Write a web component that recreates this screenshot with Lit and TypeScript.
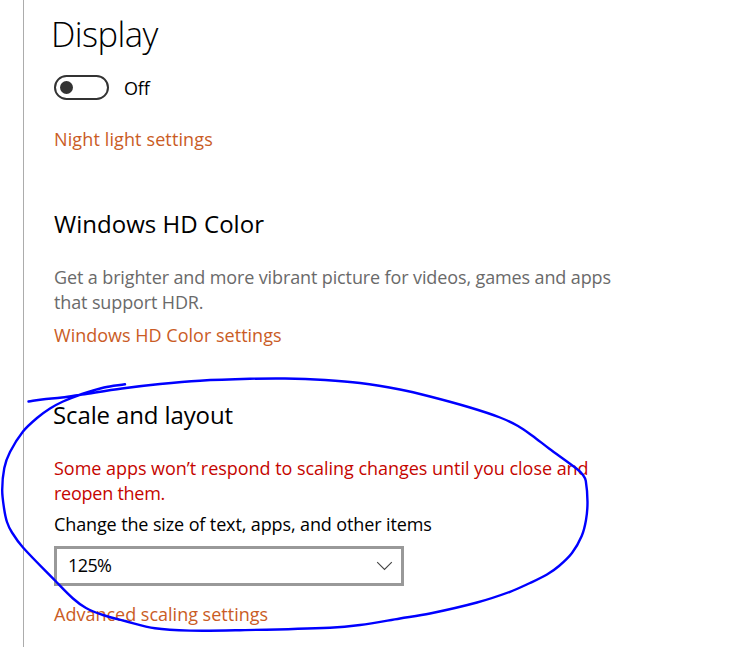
import { LitElement, html, css, svg } from "lit";
import { customElement, property } from "lit/decorators.js";

type Point = [number, number];

const STROKE: Point[] = [
  [28.5, 401.5], [42, 399.5], [62, 397.5], [82, 394.5], [122, 388.5], [160, 384], [200, 380.7], [250, 378.8],
  [285, 378.5], [325, 380], [360, 383], [400, 389.5], [430, 396.5], [470, 407.5], [500, 417.5], [518, 426],
  [532, 435.5], [549, 448.5], [577, 469], [583, 475], [585.8, 481], [587.5, 502], [586, 520], [581.7, 536],
  [572, 553], [559, 566], [547, 574.5], [530, 583], [510, 591.8], [477, 602.5], [430, 613.5], [400, 618.5],
  [360, 625], [330, 627.7], [240, 630.2], [190, 630.6], [155, 628.3], [125, 621], [103, 615], [86, 608],
  [73, 598.5], [55, 580.5], [23, 547.5], [12, 532.5], [7, 522], [4, 508], [2.2, 490], [4.3, 468],
  [10, 452], [23, 431.5], [37, 418], [50, 408.5], [63, 401.5], [82, 394], [104, 387.5], [125, 384.3],
];

/** Smooth curve running through every point. */
function curve(points: Point[]): string {
  let d = `M${points[0][0]} ${points[0][1]}`;
  for (let i = 0; i < points.length - 1; i++) {
    const a = points[i - 1] ?? points[i];
    const b = points[i];
    const c = points[i + 1];
    const e = points[i + 2] ?? c;
    const n = Math.hypot(c[0] - b[0], c[1] - b[1]);
    const tangent = (p: Point, q: Point): Point => {
      const l = Math.hypot(q[0] - p[0], q[1] - p[1]) || 1;
      return [((q[0] - p[0]) / l) * n / 3, ((q[1] - p[1]) / l) * n / 3];
    };
    const t1 = tangent(a, c);
    const t2 = tangent(b, e);
    d += `C${b[0] + t1[0]} ${b[1] + t1[1]} ${c[0] - t2[0]} ${c[1] - t2[1]} ${c[0]} ${c[1]}`;
  }
  return d;
}

@customElement("toggle-switch")
class ToggleSwitch extends LitElement {
  @property() label = "Off";
  static styles = css`
    :host { display: flex; align-items: center; gap: 15px; height: 25px; }
    .track { box-sizing: border-box; width: 55px; height: 25px; border: 2.5px solid #333; border-radius: 13px;
      display: flex; align-items: center; padding-left: 4px; }
    .knob { width: 13px; height: 13px; border-radius: 50%; background: #333; }
    .label { line-height: 25px; letter-spacing: -0.2px; padding-top: 1px; }
  `;
  render() {
    return html`<div class="track"><div class="knob"></div></div><span class="label">${this.label}</span>`;
  }
}

@customElement("select-box")
class SelectBox extends LitElement {
  @property() value = "";
  static styles = css`
    :host { box-sizing: border-box; display: flex; align-items: center; justify-content: space-between;
      width: 350px; height: 40px; border: 3px solid #999; padding: 0 8px 0 11px; background: #fff; }
    .value { line-height: 25px; letter-spacing: -0.6px; padding-bottom: 2px; }
    .chevron { display: block; width: 17px; height: 10px; fill: none; stroke: #444; stroke-width: 1.1; }
  `;
  render() {
    return html`<span class="value">${this.value}</span>
      <svg class="chevron" viewBox="0 0 17 10"><path d="M1.2 1.2L8.5 8.5L15.8 1.2" /></svg>`;
  }
}

@customElement("app-root")
class AppRoot extends LitElement {
  static styles = css`
    :host { display: block; position: relative; box-sizing: border-box; width: 740px; height: 647px; overflow: hidden;
      background: #fff; color: #000; font: 18px/25px "Open Sans", "Noto Sans", sans-serif; }
    .page { box-sizing: border-box; height: 647px; margin-left: 23px; border-left: 1px solid #acacac;
      padding: 9px 0 0 30px; display: flex; flex-direction: column; align-items: flex-start; white-space: nowrap; }
    h1, h2, p { margin: 0; font-weight: 400; }
    h1 { font-size: 34.5px; line-height: 50px; font-weight: 350; margin-left: -3px; letter-spacing: -0.55px; }
    h2 { font-size: 24px; line-height: 34px; }
    toggle-switch { margin-top: 16px; }
    .link { color: #ca5c25; text-decoration: none; }
    .night { margin-top: 27px; letter-spacing: 0.12px; }
    .color-title { margin-top: 55px; letter-spacing: 0.03px; }
    .hint { color: #6a6a6a; margin-top: 24px; }
    .color-link { margin-top: 8px; letter-spacing: 0.01px; }
    .scale-title { margin-top: 50px; margin-left: -1px; letter-spacing: -0.12px; }
    .warning { color: #c50500; margin-top: 24px; }
    .size-label { margin-top: 6px; letter-spacing: -0.12px; }
    select-box { margin-top: 9px; }
    .advanced { margin-top: 16px; letter-spacing: 0; }
    .line { display: block; width: max-content; }
    .l1 { letter-spacing: -0.12px; }
    .l2 { letter-spacing: -0.13px; }
    .l3 { letter-spacing: -0.035px; }
    .l4 { letter-spacing: -0.25px; }
    .ink { position: absolute; inset: 0; width: 740px; height: 647px; fill: none; stroke: #0000ff;
      stroke-width: 2.4; stroke-linecap: round; stroke-linejoin: round; pointer-events: none; }
  `;
  render() {
    return html`
      <main class="page">
        <h1>Display</h1>
        <toggle-switch label="Off"></toggle-switch>
        <a class="link night">Night light settings</a>
        <h2 class="color-title">Windows HD Color</h2>
        <p class="hint">
          <span class="line l1">Get a brighter and more vibrant picture for videos, games and apps</span>
          <span class="line l2">that support HDR.</span>
        </p>
        <a class="link color-link">Windows HD Color settings</a>
        <h2 class="scale-title">Scale and layout</h2>
        <p class="warning">
          <span class="line l3">Some apps won’t respond to scaling changes until you close and</span>
          <span class="line l4">reopen them.</span>
        </p>
        <p class="size-label">Change the size of text, apps, and other items</p>
        <select-box value="125%"></select-box>
        <a class="link advanced">Advanced scaling settings</a>
      </main>
      <svg class="ink" viewBox="0 0 740 647">${svg`<path d=${curve(STROKE)} />`}</svg>
    `;
  }
}
